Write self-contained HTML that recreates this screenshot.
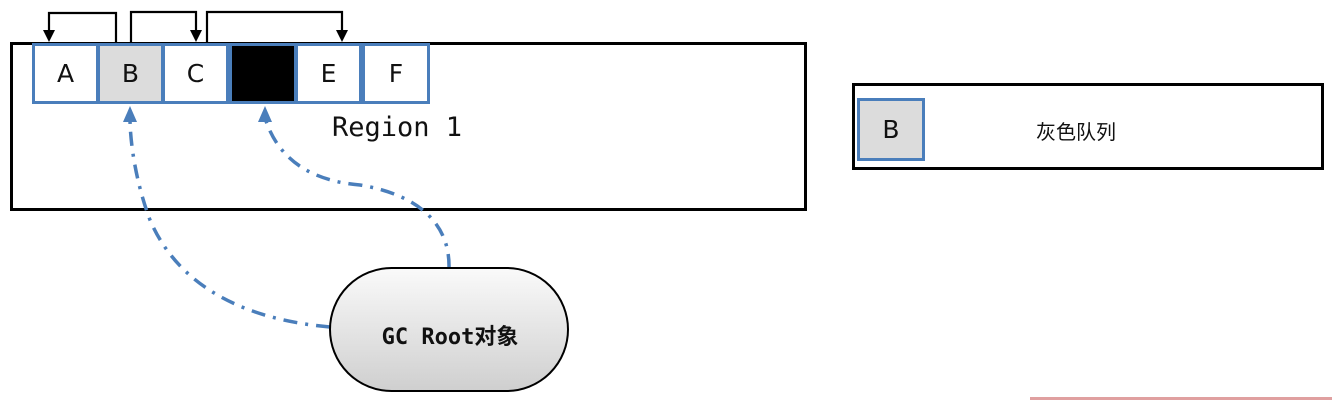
<!DOCTYPE html><html><head><style>
body{margin:0;width:1332px;height:400px;background:#fff;position:relative;overflow:hidden;font-family:"Liberation Sans","Noto Sans CJK SC",sans-serif}
.r{position:absolute;box-sizing:border-box}
.c{position:absolute;box-sizing:border-box;border:3px solid #4a7ebb;height:61px;top:43px;display:flex;align-items:center;justify-content:center;font-size:25px;color:#111;font-family:"DejaVu Sans",sans-serif}
</style></head><body>
<div class="r" style="left:10px;top:42px;width:797px;height:169px;border:3px solid #000"></div>
<div class="c" style="left:32px;width:67px;background:#fff">A</div>
<div class="c" style="left:97px;width:67px;background:#dcdcdc">B</div>
<div class="c" style="left:162px;width:67px;background:#fff">C</div>
<div class="c" style="left:229px;width:68px;background:#000"></div>
<div class="c" style="left:295px;width:67px;background:#fff">E</div>
<div class="c" style="left:362px;width:68px;background:#fff">F</div>
<div class="r" style="left:332px;top:112px;font-family:'DejaVu Sans Mono','Liberation Mono',monospace;font-size:27px;color:#111">Region 1</div>
<div class="r" style="left:852px;top:83px;width:472px;height:87px;border:3px solid #000"></div>
<div class="c" style="left:857px;top:98px;width:68px;height:63px;background:#dcdcdc">B</div>
<div class="r" style="left:1036px;top:116px;font-size:20px;color:#111">灰色队列</div>
<svg class="r" style="left:0;top:0" width="1332" height="400">
<defs><linearGradient id="g" x1="0" y1="0" x2="0" y2="1"><stop offset="0" stop-color="#fafafa"/><stop offset="1" stop-color="#cfcfcf"/></linearGradient></defs>
<g fill="none" stroke="#000" stroke-width="2.2">
<path d="M116,43V13H49V32"/>
<path d="M131,43V12H196V32"/>
<path d="M207,43V12H342V32"/>
</g>
<g fill="#000">
<path d="M43,30H55L49,42z"/><path d="M190,30H202L196,42z"/><path d="M336,30H348L342,42z"/>
</g>
<g fill="none" stroke="#4a7ebb" stroke-width="3.5" stroke-dasharray="14,8,3,8">
<path d="M330,327C250,320 180,290 150,220C135,180 130,140 130,118"/>
<path d="M449,268C450,225 420,195 360,185C300,180 275,150 265,118"/>
</g>
<path d="M123,122L130,106L137,122z" fill="#4a7ebb"/>
<path d="M258,122L265,106L272,122z" fill="#4a7ebb"/>
<rect x="330" y="268" width="238" height="123" rx="61.5" fill="url(#g)" stroke="#000" stroke-width="2"/>
<text x="450" y="344" text-anchor="middle" font-size="22" font-weight="bold" font-family="'DejaVu Sans Mono','Noto Sans CJK SC',monospace" fill="#111">GC Root对象</text>
<rect x="1030" y="397" width="302" height="3" fill="#e0a0a0"/>
</svg>
</body></html>
